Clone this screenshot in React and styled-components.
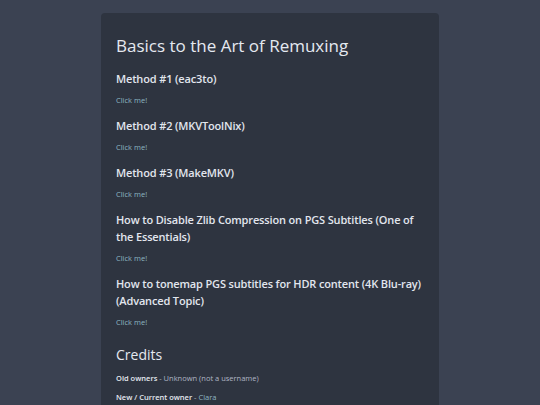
import React from 'react';
import styled, { createGlobalStyle } from 'styled-components';

const GlobalStyle = createGlobalStyle`
  html, body {
    margin: 0;
    padding: 0;
    background: #3b4252;
    font-family: "Open Sans", "Noto Sans", sans-serif;
  }
`;

const Page = styled.main`
  display: flex;
  justify-content: center;
  padding-top: 13px;
  min-height: 100vh;
  box-sizing: border-box;
`;

const Card = styled.section`
  width: 338px;
  box-sizing: border-box;
  background: #2e3440;
  border-radius: 4px;
  padding: 22px 14px 20px 15px;
  color: #d8dee9;
`;

const Title = styled.h1`
  margin: 0 0 13px;
  font-size: 17px;
  line-height: 22px;
  font-weight: 500;
  color: #e5e9f0;
`;

const Heading = styled.h3`
  margin: 0 0 8px;
  font-size: 11px;
  line-height: 17px;
  font-weight: 600;
  letter-spacing: -0.15px;
  color: #e2e6ee;
`;

const Block = styled.div`
  margin-bottom: 12px;
`;

const Link = styled.a`
  display: block;
  font-size: 7.5px;
  line-height: 10px;
  color: #8db4c0;
  text-decoration: none;
`;

const SubTitle = styled.h2`
  margin: 18px 0 7px;
  font-size: 14px;
  line-height: 20px;
  font-weight: 500;
  color: #e5e9f0;
`;

const CreditLine = styled.p`
  margin: 0 0 7px;
  font-size: 7.5px;
  line-height: 12px;
  color: #aeb6c4;

  b {
    font-weight: 600;
    color: #e5e9f0;
  }

  a {
    color: #8db4c0;
    text-decoration: none;
  }
`;

const guides = [
  'Method #1 (eac3to)',
  'Method #2 (MKVToolNix)',
  'Method #3 (MakeMKV)',
  'How to Disable Zlib Compression on PGS Subtitles (One of the Essentials)',
  'How to tonemap PGS subtitles for HDR content (4K Blu-ray) (Advanced Topic)',
];

export default function App() {
  return (
    <>
      <GlobalStyle />
      <Page>
        <Card>
          <Title>Basics to the Art of Remuxing</Title>
          {guides.map((g) => (
            <Block key={g}>
              <Heading>{g}</Heading>
              <Link href="#">Click me!</Link>
            </Block>
          ))}
          <SubTitle>Credits</SubTitle>
          <CreditLine><b>Old owners</b> - Unknown (not a username)</CreditLine>
          <CreditLine><b>New / Current owner</b> - <a href="#">Clara</a></CreditLine>
        </Card>
      </Page>
    </>
  );
}
